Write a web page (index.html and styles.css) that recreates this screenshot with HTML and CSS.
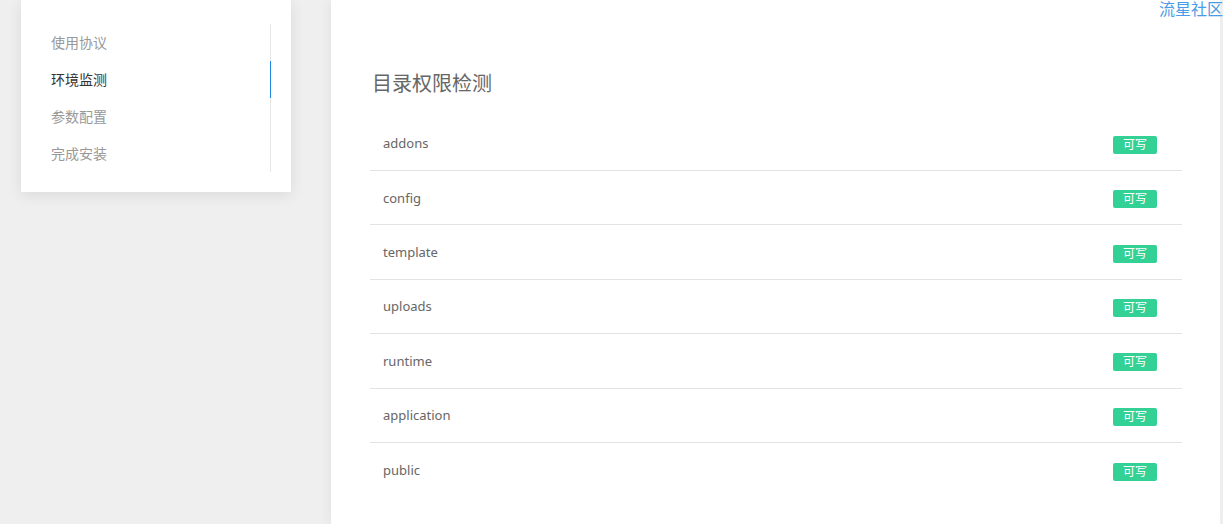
FILE: index.html
```html
<!DOCTYPE html>
<html lang="zh-CN">
<head>
  <meta charset="UTF-8" />
  <title>安装向导 - 环境监测</title>
  <link rel="stylesheet" href="styles.css">
</head>
<body>
  <div class="layout">
    <!-- Steps sidebar -->
    <aside class="step-card">
      <ul class="step-list">
        <li class="step-item">使用协议</li>
        <li class="step-item active">环境监测</li>
        <li class="step-item">参数配置</li>
        <li class="step-item">完成安装</li>
      </ul>
    </aside>

    <main class="main-panel">
      <a class="site-link" href="#">流星社区</a>

      <h2 class="section-title">目录权限检测</h2>
      <div class="check-table">
        <div class="check-row"><span class="dir-name">addons</span><span class="badge">可写</span></div>
        <div class="check-row"><span class="dir-name">config</span><span class="badge">可写</span></div>
        <div class="check-row"><span class="dir-name">template</span><span class="badge">可写</span></div>
        <div class="check-row"><span class="dir-name">uploads</span><span class="badge">可写</span></div>
        <div class="check-row"><span class="dir-name">runtime</span><span class="badge">可写</span></div>
        <div class="check-row"><span class="dir-name">application</span><span class="badge">可写</span></div>
        <div class="check-row"><span class="dir-name">public</span><span class="badge">可写</span></div>
      </div>
    </main>
  </div>
</body>
</html>
```

FILE: styles.css
```css
* {
  box-sizing: border-box;
  margin: 0;
  padding: 0;
}

body {
  background-color: #efefef;
  font-family: "Noto Sans", "Noto Sans CJK SC", sans-serif;
  color: #666;
  overflow: hidden;
  height: 524px;
}

.layout {
  display: flex;
  align-items: flex-start;
  height: 100%;
}

/* Sidebar steps */
.step-card {
  width: 270px;
  margin-left: 21px;
  padding: 24px 0 20px 30px;
  background: #fff;
  box-shadow: 0 3px 14px rgba(0, 0, 0, 0.09);
}

.step-list {
  list-style: none;
  width: 220px;
  border-right: 1px solid #e6e6e6;
}

.step-item {
  height: 37px;
  line-height: 37px;
  font-size: 14px;
  color: #999;
  margin-right: -1px;
  border-right: 1px solid transparent;
}

.step-item.active {
  color: #333;
  border-right-color: #1e88e5;
}

/* Main panel */
.main-panel {
  position: relative;
  width: 889px;
  height: 100%;
  margin-left: 40px;
  padding: 70px 38px 0 39px;
  background: #fff;
  box-shadow: -4px 0 10px rgba(0, 0, 0, 0.04);
}

.site-link {
  position: absolute;
  top: -4px;
  right: -3px;
  font-size: 16px;
  color: #4a9be6;
  text-decoration: none;
  white-space: nowrap;
}

.section-title {
  font-size: 20px;
  font-weight: 400;
  line-height: 28px;
  color: #666;
  margin: 0 0 18.6px 2px;
}

.check-row {
  display: flex;
  align-items: center;
  justify-content: space-between;
  height: 54.4px;
  padding: 0 25px 0 13px;
  border-bottom: 1px solid #e3e3e3;
}

.check-row:last-child {
  border-bottom: none;
}

.dir-name {
  font-size: 13px;
  color: #666;
}

.badge {
  width: 44px;
  height: 18px;
  line-height: 18px;
  margin-top: 3px;
  text-align: center;
  font-size: 12px;
  color: #fff;
  background: #33d196;
  border-radius: 2px;
}
```
